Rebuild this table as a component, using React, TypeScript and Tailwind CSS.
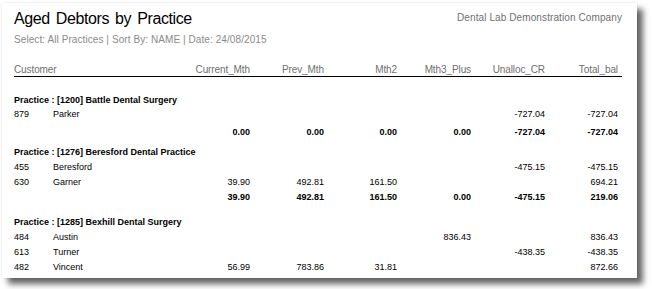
import React from "react";

type Row =
  | { kind: "practice"; text: string; cls: string }
  | { kind: "detail"; code: string; name: string; vals: string[]; cls: string }
  | { kind: "total"; vals: string[]; cls: string };

const rows: Row[] = [
  { kind: "practice", text: "Practice : [1200] Battle Dental Surgery", cls: "mt-[17px] h-[14px]" },
  { kind: "detail", code: "879", name: "Parker", vals: ["", "", "", "", "-727.04", "-727.04"], cls: "h-[14px]" },
  { kind: "total", vals: ["0.00", "0.00", "0.00", "0.00", "-727.04", "-727.04"], cls: "mt-[3px] h-[15px]" },
  { kind: "practice", text: "Practice : [1276] Beresford Dental Practice", cls: "mt-[5px] h-[15px]" },
  { kind: "detail", code: "455", name: "Beresford", vals: ["", "", "", "", "-475.15", "-475.15"], cls: "h-[15px]" },
  { kind: "detail", code: "630", name: "Garner", vals: ["39.90", "492.81", "161.50", "", "", "694.21"], cls: "h-[15px]" },
  { kind: "total", vals: ["39.90", "492.81", "161.50", "0.00", "-475.15", "219.06"], cls: "h-[15px]" },
  { kind: "practice", text: "Practice : [1285] Bexhill Dental Surgery", cls: "mt-[10px] h-[15px]" },
  { kind: "detail", code: "484", name: "Austin", vals: ["", "", "", "836.43", "", "836.43"], cls: "h-[15px]" },
  { kind: "detail", code: "613", name: "Turner", vals: ["", "", "", "", "-438.35", "-438.35"], cls: "h-[15px]" },
  { kind: "detail", code: "482", name: "Vincent", vals: ["56.99", "783.86", "31.81", "", "", "872.66"], cls: "h-[15px]" },
];

const grid = "grid grid-cols-[39px_120px_77px_74px_73px_74px_74px_73px] items-center";

export default function App() {
  return (
    <div className="w-[652px] h-[289px] bg-white overflow-hidden" style={{ fontFamily: '"Liberation Sans", Arial, sans-serif' }}>
      <div className="ml-[2px] mt-[3px] w-[635px] h-[275px] bg-white shadow-[0_0_2px_rgba(0,0,0,0.12),6px_6px_6px_rgba(0,0,0,0.6)] pl-[12px] pr-[15px] flex flex-col">
        <div className="flex justify-between items-start">
          <div className="mt-[6px] text-[16px] leading-[20px] text-black [word-spacing:2px] tracking-[-0.4px]">Aged Debtors by Practice</div>
          <div className="mt-[9px] text-[10px] leading-[12px] text-[#6f6f6f] tracking-[0.1px]">Dental Lab Demonstration Company</div>
        </div>
        <div className="mt-[5px] text-[10px] leading-[12px] text-[#8a8a8a] tracking-[0.08px]">Select: All Practices | Sort By: NAME | Date: 24/08/2015</div>
        <div className={`${grid} mt-[16px] h-[14px] text-[10px] text-[#6f6f6f] tracking-[-0.1px]`}>
          <div className="col-span-2">Customer</div>
          <div className="text-right">Current_Mth</div>
          <div className="text-right">Prev_Mth</div>
          <div className="text-right">Mth2</div>
          <div className="text-right">Mth3_Plus</div>
          <div className="text-right">Unalloc_CR</div>
          <div className="text-right">Total_bal</div>
        </div>
        <div className="w-[608px] h-[1px] bg-black"></div>
        {rows.map((r, i) => {
          if (r.kind === "practice") {
            return (
              <div key={i} className={`${r.cls} flex items-center text-[9px] font-bold text-black`}>
                {r.text}
              </div>
            );
          }
          if (r.kind === "detail") {
            return (
              <div key={i} className={`${grid} ${r.cls} text-[9px] text-black`}>
                <div>{r.code}</div>
                <div>{r.name}</div>
                {r.vals.map((v, j) => (
                  <div key={j} className="text-right">{v}</div>
                ))}
              </div>
            );
          }
          return (
            <div key={i} className={`${grid} ${r.cls} text-[9px] font-bold text-black`}>
              <div></div>
              <div></div>
              {r.vals.map((v, j) => (
                <div key={j} className="text-right">{v}</div>
              ))}
            </div>
          );
        })}
      </div>
    </div>
  );
}
